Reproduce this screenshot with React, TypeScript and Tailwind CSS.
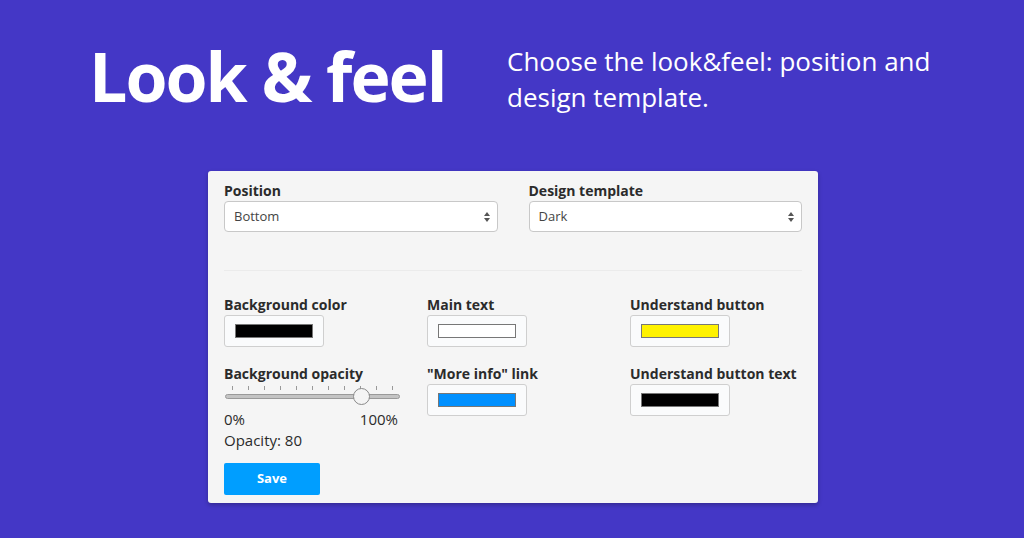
const Swatch = ({ color }: { color: string }) => (
  <div className="w-[100px] h-[32px] border border-[#cfcfcf] bg-[#fafbfc] rounded-[3px] flex items-center justify-center">
    <div className="w-[78px] h-[14px] border border-[#777]" style={{ backgroundColor: color }} />
  </div>
);

const SelectBox = ({ value }: { value: string }) => (
  <div className="h-[31px] bg-white border border-[#c8c8c8] rounded-[4px] flex items-center justify-between pl-[9px] pr-[6px] text-[13px] text-[#444]">
    <span>{value}</span>
    <svg width="8" height="12" viewBox="0 0 8 12">
      <path d="M4 1L7 5H1z" fill="#555" />
      <path d="M4 11L7 7H1z" fill="#555" />
    </svg>
  </div>
);

const Label = ({ children }: { children: React.ReactNode }) => (
  <div className="h-[20px] text-[14px] leading-[20px] font-bold text-[#2b2b2b] whitespace-nowrap">{children}</div>
);

const ticks = [0, 1, 2, 3, 4, 5, 6, 7, 8, 9, 10];

const App = () => {
  return (
    <div
      className="w-full min-h-screen bg-[#4437c6] pt-[33px] overflow-hidden"
      style={{ fontFamily: '"Open Sans", sans-serif' }}
    >
      <div className="flex items-start pl-[89px]">
        <h1 className="w-[418px] text-[68px] leading-[86px] font-bold text-white tracking-[-2px]">
          Look &amp; feel
        </h1>
        <p className="w-[460px] mt-[10px] text-[26px] leading-[36px] text-white">
          Choose the look&amp;feel: position and design template.
        </p>
      </div>

      <div className="w-[610px] ml-[208px] mt-[52px] bg-[#f5f5f5] rounded-[3px] shadow-[0_2px_4px_rgba(0,0,0,0.25)] px-[16px] pt-[10px] pb-[8px]">
        <div className="grid grid-cols-2 gap-x-[31px]">
          <div>
            <Label>Position</Label>
            <SelectBox value="Bottom" />
          </div>
          <div>
            <Label>Design template</Label>
            <SelectBox value="Dark" />
          </div>
        </div>

        <div className="mt-[38px] h-px bg-[#ebebeb]" />

        <div className="mt-[24px] grid grid-cols-[203px_203px_1fr]">
          <div>
            <Label>Background color</Label>
            <Swatch color="#000000" />
            <div className="mt-[17px]">
              <Label>Background opacity</Label>
              <div className="relative w-[175px] h-[25px] ml-[1px]">
                <div className="absolute left-[7px] right-[7px] top-[2px] flex justify-between">
                  {ticks.map((t) => (
                    <div key={t} className="w-px h-[4px] bg-[#999]" />
                  ))}
                </div>
                <div className="absolute left-0 right-0 top-[10px] h-[5px] rounded-full border border-[#9a9a9a] bg-[#c4c4c4]" />
                <div className="absolute left-[128px] top-[4px] w-[17px] h-[17px] rounded-full border border-[#8a8a8a] bg-[#f4f4f4]" />
              </div>
              <div className="w-[174px] flex justify-between text-[15px] leading-[21px] text-[#2b2b2b]">
                <span>0%</span>
                <span>100%</span>
              </div>
              <div className="text-[15px] leading-[21px] text-[#2b2b2b]">Opacity: 80</div>
            </div>
          </div>
          <div>
            <Label>Main text</Label>
            <Swatch color="#ffffff" />
            <div className="mt-[17px]">
              <Label>"More info" link</Label>
              <Swatch color="#0090ff" />
            </div>
          </div>
          <div>
            <Label>Understand button</Label>
            <Swatch color="#fff200" />
            <div className="mt-[17px]">
              <Label>Understand button text</Label>
              <Swatch color="#000000" />
            </div>
          </div>
        </div>

        <button className="mt-[12px] w-[96px] h-[32px] bg-[#009eff] rounded-[2px] text-white text-[13px] font-bold">
          Save
        </button>
      </div>
    </div>
  );
};

export default App;
